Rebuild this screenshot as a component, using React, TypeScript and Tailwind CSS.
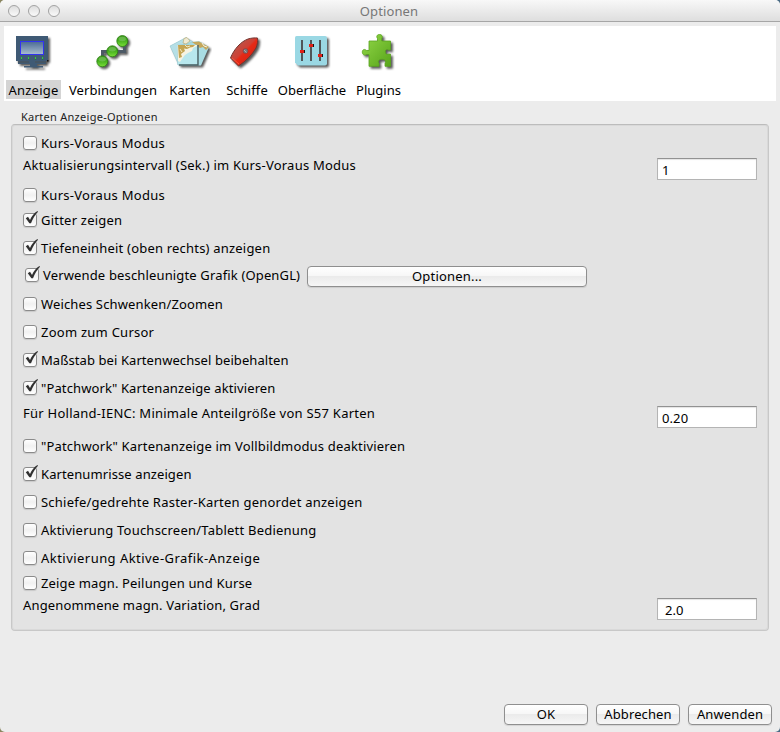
import React from "react";

const shadow = { filter: "drop-shadow(2px 2px 1px rgba(0,0,0,.65))" };

function DisplayIcon() {
  return (
    <svg width="45" height="40" viewBox="11 32 45 40">
      <defs>
        <linearGradient id="scr" x1="0" y1="0" x2="0" y2="1">
          <stop offset="0" stopColor="#4a6a94" />
          <stop offset="1" stopColor="#a9bdd0" />
        </linearGradient>
      </defs>
      <g style={shadow}>
        <path d="M16 36H48V61H46V64H37V66H43V67.5H24V66H30V64H18V61H16Z" fill="#3f5a75" />
      </g>
      <rect x="20.5" y="41.5" width="23" height="13" fill="url(#scr)" stroke="#3232f2" strokeWidth="1" />
      {[21, 28, 35, 42].map((x) => (
        <g key={x}>
          <rect x={x} y="57" width="1" height="3" fill="#2a6a4c" />
          <rect x={x} y="57" width="1" height="2" fill="#35d035" />
        </g>
      ))}
      <path d="M18 62H29M35 62H46" stroke="#4b5055" strokeWidth="1.2" />
      <rect x="47" y="60" width="1.5" height="1.5" fill="#111" />
    </svg>
  );
}

function ConnectionIcon() {
  return (
    <svg width="44" height="40" viewBox="91 32 44 40">
      <defs>
        <linearGradient id="ball" x1="0" y1="0" x2="0" y2="1">
          <stop offset="0" stopColor="#3c9a1a" />
          <stop offset=".45" stopColor="#43ad1c" />
          <stop offset="1" stopColor="#7be03a" />
        </linearGradient>
      </defs>
      <g style={shadow}>
        <path d="M102.500 61V51.500H112M112 51.500H124.500V41" fill="none" stroke="#4d5a66" strokeWidth="3" />
        {[[122.300, 41], [112.300, 51.300], [102.300, 61.300]].map(([x, y]) => (
          <circle key={x} cx={x} cy={y} r="5.500" fill="url(#ball)" stroke="#2b7d12" strokeWidth=".8" />
        ))}
      </g>
      {[[122.300, 39], [112.300, 49.300], [102.300, 59.300]].map(([x, y]) => (
        <ellipse key={x} cx={x} cy={y} rx="3.600" ry="2.200" fill="#fff" opacity=".2" />
      ))}
    </svg>
  );
}

function ChartIcon() {
  return (
    <svg width="44" height="40" viewBox="168 32 44 40">
      <g style={shadow}>
        <path d="M170 46L186 37.500L193 42L199 41L209 47L201 65.500H179Z" fill="#a9dce3" />
      </g>
      <path d="M170 46L186 37.500L193 42L178 46L179 65.500Z" fill="#b5dfe6" stroke="#98c2c8" strokeWidth=".5" />
      <path d="M183 43L184 38.500L187 37.500L190 41L186 44Z" fill="#f0ead2" stroke="#b5a469" strokeWidth=".6" />
      <path d="M192 42L199 41.500L209 47L206 50L203 47L200 48Z" fill="#c5a75b" />
      <path d="M202 43L204 46L207 47" stroke="#f5f2e2" fill="none" />
      <rect x="177.500" y="45" width="20" height="19.500" fill="#b8e7ed" stroke="#9cc8ce" strokeWidth=".5" />
      <path d="M177.500 45H197V46L193 48L192 51L188 53L185 55L182 59L180 62L178 61Z" fill="#f6f3e2" />
      <path d="M178 45H195L193 47L190 47.500L187 49L184 48.500L185 51L181 54L182 57L179 58Z" fill="#c3a452" />
      <path d="M185 45L187 47L190 46M180 49L182 52" stroke="#f2e9c4" fill="none" />
      <path d="M198 45V65H179" fill="none" stroke="#4a6064" strokeWidth="1.400" />
    </svg>
  );
}

function ShipIcon() {
  return (
    <svg width="44" height="40" viewBox="225 32 44 40">
      <defs>
        <linearGradient id="hull" x1="0" y1="0" x2="1" y2="1">
          <stop offset=".2" stopColor="#b8564c" />
          <stop offset=".47" stopColor="#cf4034" />
          <stop offset=".52" stopColor="#e62a16" />
          <stop offset="1" stopColor="#c51d10" />
        </linearGradient>
      </defs>
      <g style={shadow}>
        <path d="M230.500 58C234 49 241 41.500 248 39C251 38 255 37.700 257.500 38C258 41 257.500 44 256 48C252 55 246 61 238.500 66Z" fill="url(#hull)" stroke="#73342f" strokeWidth="1" />
      </g>
      <path d="M232 58L239 64" stroke="#ff5a40" strokeWidth=".8" />
      <circle cx="245.500" cy="51" r="2.500" fill="#78777a" stroke="#8e3a38" strokeWidth=".7" />
      <path d="M244 50L246.500 52.500" stroke="#aaa" />
    </svg>
  );
}

function SlidersIcon() {
  return (
    <svg width="44" height="40" viewBox="290 32 44 40">
      <g style={shadow}>
        <path d="M296.500 36H325Q327 36 327 38V63.500Q327 65.500 325 65.500H298L295 62.500V37.500Q295 36 296.500 36Z" fill="#9ad8e4" />
      </g>
      {[[302, 51.500], [311, 45.500], [320, 55.500]].map(([x, y]) => (
        <g key={x}>
          <path d={`M${x} 40V61`} stroke="#505659" strokeWidth="2" />
          <rect x={x} y={y - 1.5} width="3" height="3" fill="#151515" />
          <rect x={x - 2} y={y - 1.5} width="4" height="3" fill="#e12218" />
        </g>
      ))}
    </svg>
  );
}

function PuzzleIcon() {
  return (
    <svg width="45" height="40" viewBox="356 32 45 40">
      <defs>
        <linearGradient id="pz" x1="0" y1="0" x2="1" y2="1">
          <stop offset="0" stopColor="#93d848" />
          <stop offset="1" stopColor="#58a51b" />
        </linearGradient>
      </defs>
      <g style={shadow}>
        <path
          d="M369 41H377.500V38.500C376 36.500 377 34.500 379.500 34.500S383 36.500 381.800 38.500V41H390.500V50H388.500C387 49 385.300 49.500 385.300 51.800S387 54.800 388.500 54H390.500V66.300H385V63.500C386.500 61 385 59.300 382 59.300S377.500 61 379 63.500V66.300H369V54.500H366.500C364.500 56 362.300 54.500 362.300 52S364.500 48.500 366.500 50.500H369Z"
          fill="url(#pz)"
          stroke="#59a51e"
          strokeWidth=".8"
        />
      </g>
    </svg>
  );
}

const tabs = [
  { label: "Anzeige", icon: <DisplayIcon />, cls: "w-[55px] ml-[2px] bg-[#d4d4d4] tracking-[0.25px]" },
  { label: "Verbindungen", icon: <ConnectionIcon />, cls: "w-[88px] ml-[8px]" },
  { label: "Karten", icon: <ChartIcon />, cls: "w-[42px] ml-[12px]" },
  { label: "Schiffe", icon: <ShipIcon />, cls: "w-[42px] ml-[15px]" },
  { label: "Oberfläche", icon: <SlidersIcon />, cls: "w-[68px] ml-[10px]" },
  { label: "Plugins", icon: <PuzzleIcon />, cls: "w-[45px] ml-[10px] tracking-[0px]" },
];

function CheckBox({ on }: { on?: boolean }) {
  return (
    <span className="relative block h-[14px] w-[14px] shrink-0 rounded-[3px] border border-[#8b8b8b] bg-gradient-to-b from-white via-[#f1f1f1] to-white shadow-[0_1px_1px_rgba(0,0,0,0.12)]">
      {on && (
        <svg className="absolute -left-px -top-[4px]" width="17" height="16" viewBox="0 0 17 16">
          <path d="M2.800 8.200L5 6.800L7 10C8.700 6.200 10.800 3.200 14.400 1L15 1.700C12 4.900 9.800 8.600 8 13.200H6.400Z" fill="#303030" />
        </svg>
      )}
    </span>
  );
}

function Check({ label, on, cls }: { label: string; on?: boolean; cls: string }) {
  return (
    <label className={"flex h-[22px] items-center gap-1 " + cls}>
      <CheckBox on={on} />
      <span>{label}</span>
    </label>
  );
}

function Field({ label, value, cls, vcls = "pl-[4px]" }: { label: string; value: string; cls: string; vcls?: string }) {
  return (
    <div className={"flex h-[22px] items-center justify-between " + cls}>
      <span className="pb-[9px]">{label}</span>
      <div className={"flex h-[22px] w-[100px] items-center border border-[#b4b4b4] border-t-[#929292] bg-white pt-px tracking-[0.1px] shadow-[inset_0_1px_1px_#e4e4e4] " + vcls}>
        {value}
      </div>
    </div>
  );
}

function Button({ label, cls }: { label: string; cls: string }) {
  return (
    <button className={"flex h-[21px] shrink-0 items-center justify-center rounded-[4px] border border-[#8f8f8f] bg-[linear-gradient(#fff,#f7f7f7_45%,#ebebeb_50%,#f6f6f6)] pb-[2px] shadow-[0_1px_1px_rgba(0,0,0,0.1)] " + cls}>
      {label}
    </button>
  );
}

export default function App() {
  return (
    <div className="h-[732px] w-[780px] bg-[linear-gradient(90deg,#8a8660_50%,#4a6b85_50%)]">
      <div className="flex h-full flex-col overflow-hidden rounded-[5px] bg-[#ececec] font-['Noto_Sans','Lucida_Grande',sans-serif] text-[13px] leading-[18px] tracking-[0.1px] whitespace-nowrap text-black">
        <header className="flex h-[22px] shrink-0 items-center border-b border-[#a6a6a6] bg-gradient-to-b from-[#f8f8f8] to-[#dedede] pl-[8px]">
          <div className="flex w-[52px] gap-[8px]">
            {[0, 1, 2].map((i) => (
              <span key={i} className="h-[12px] w-[12px] rounded-full border border-[#a2a2a2] bg-gradient-to-b from-[#dedede] to-[#fafafa]" />
            ))}
          </div>
          <h1 className="flex-1 pr-[62px] text-center text-[#777]">Optionen</h1>
        </header>
        <nav className="mx-1 mt-1 flex h-[75px] shrink-0 bg-white">
          {tabs.map((t) => (
            <div key={t.label} className={"flex h-[73px] flex-col items-center bg-clip-content pt-[54px] " + t.cls}>
              <div className="-mt-[48px] h-[48px] shrink-0">{t.icon}</div>
              <span className="h-[19px] leading-[20px]">{t.label}</span>
            </div>
          ))}
        </nav>
        <main className="mx-[11px] pt-[8px]">
          <h2 className="h-[15px] pl-[10px] text-[11px] leading-[15px] tracking-[0.27px] text-[#222]">Karten Anzeige-Optionen</h2>
          <section className="h-[507px] rounded-[4px] border border-[#c8c8c8] border-t-[#bcbcbc] bg-[#e3e3e3] px-[11px] pt-[7px] shadow-[inset_0_0_0_1px_#d9d9d9]">
            <Check label="Kurs-Voraus Modus" cls="tracking-[0.28px]" />
            <Field label="Aktualisierungsintervall (Sek.) im Kurs-Voraus Modus" value="1" cls="mt-[4px] tracking-[0.22px]" />
            <Check label="Kurs-Voraus Modus" cls="mt-[4px] tracking-[0.28px]" />
            <Check label="Gitter zeigen" on cls="mt-[3px] tracking-[0.22px]" />
            <Check label="Tiefeneinheit (oben rechts) anzeigen" on cls="mt-[6px] tracking-[0.2px]" />
            <div className="mt-[6px] flex h-[22px] items-end">
              <Check label="Verwende beschleunigte Grafik (OpenGL)" on cls="w-[282px] pb-[2px] pl-[2px] tracking-[0.15px]" />
              <Button label="Optionen..." cls="ml-[2px] w-[280px] tracking-[0.2px]" />
            </div>
            <Check label="Weiches Schwenken/Zoomen" cls="mt-[6px] tracking-[0.14px]" />
            <Check label="Zoom zum Cursor" cls="mt-[6px] tracking-[0.25px]" />
            <Check label="Maßstab bei Kartenwechsel beibehalten" on cls="mt-[6px] tracking-[0.08px]" />
            <Check label={'"Patchwork" Kartenanzeige aktivieren'} on cls="mt-[6px] tracking-[0.12px]" />
            <Field label="Für Holland-IENC: Minimale Anteilgröße von S57 Karten" value="0.20" cls="mt-[7px] tracking-[0.25px]" />
            <Check label={'"Patchwork" Kartenanzeige im Vollbildmodus deaktivieren'} cls="mt-[7px] tracking-[0.17px]" />
            <Check label="Kartenumrisse anzeigen" on cls="mt-[6px]" />
            <Check label="Schiefe/gedrehte Raster-Karten genordet anzeigen" cls="mt-[6px] tracking-[0.23px]" />
            <Check label="Aktivierung Touchscreen/Tablett Bedienung" cls="mt-[6px] tracking-[0.22px]" />
            <Check label="Aktivierung Aktive-Grafik-Anzeige" cls="mt-[6px] tracking-[0.46px]" />
            <Check label="Zeige magn. Peilungen und Kurse" cls="mt-[3px] tracking-[0.16px]" />
            <Field label="Angenommene magn. Variation, Grad" value="2.0" cls="mt-[4px] tracking-[0.16px]" vcls="pl-[7px]" />
          </section>
        </main>
        <footer className="mt-[73px] flex justify-end gap-[8px] pr-[8px]">
          <Button label="OK" cls="w-[84px]" />
          <Button label="Abbrechen" cls="w-[84px]" />
          <Button label="Anwenden" cls="w-[84px]" />
        </footer>
      </div>
    </div>
  );
}
